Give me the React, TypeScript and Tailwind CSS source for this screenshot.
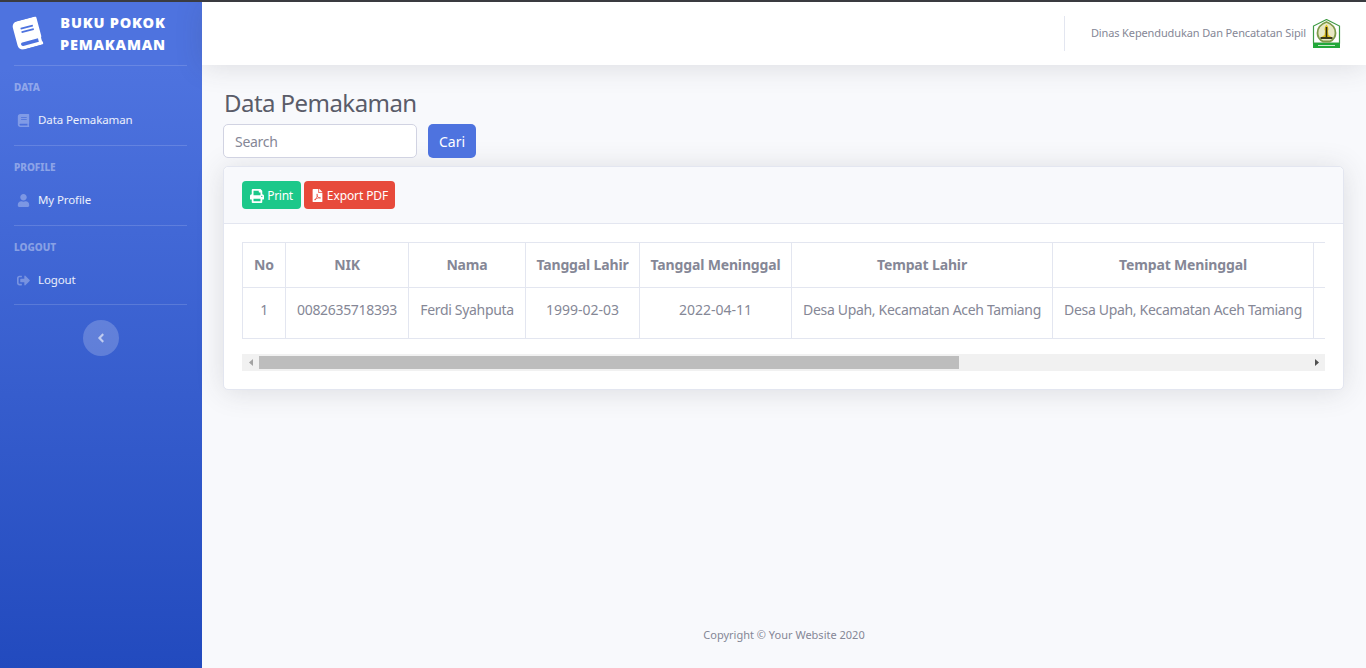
import { FaBook, FaUser, FaSignOutAlt, FaPrint, FaFilePdf, FaAngleLeft } from "react-icons/fa";

const fontStack = { fontFamily: '"Noto Sans", "Open Sans", sans-serif' };

function Emblem() {
  return (
    <svg width="29" height="29" viewBox="0 0 29 29" aria-hidden="true">
      <path d="M14.5 0.5 L27.5 7 L27.5 24 L1.5 24 L1.5 7 Z" fill="#ffffff" stroke="#3f9b45" strokeWidth="1.2" />
      <path d="M14.5 3 C20 5 23.5 9 23.5 14 C23.5 18 21 21 18 22.5 L11 22.5 C8 21 5.5 18 5.5 14 C5.5 9 9 5 14.5 3 Z" fill="#e8e8c4" stroke="#7d9a4a" strokeWidth="1.8" />
      <path d="M14.5 5.5 C16.5 8 17 10.5 16 12 L16.5 16 L19.5 18 L9.5 18 L12.5 16 L13 12 C12 10.5 12.5 8 14.5 5.5 Z" fill="#e2c21c" />
      <rect x="13.7" y="8" width="1.6" height="10" fill="#2c2c14" />
      <rect x="8.5" y="18" width="12" height="2" fill="#3a3a1a" />
      <rect x="1" y="24" width="27" height="5" fill="#22a83a" />
      <rect x="6" y="26" width="17" height="1" fill="#c9eccd" />
    </svg>
  );
}

function SideItem({ icon, label }: { icon: React.ReactNode; label: string }) {
  return (
    <div className="flex h-[24px] items-center pl-[17px] text-[11.5px] tracking-[-0.1px] text-white/90">
      <span className="flex w-[21px] shrink-0 items-center text-[13px] text-white/30">{icon}</span>
      <span>{label}</span>
    </div>
  );
}

function SideHeading({ label }: { label: string }) {
  return (
    <div className="flex h-[42px] items-center pl-[14px] pt-[1px] text-[10px] font-extrabold uppercase text-white/40">
      {label}
    </div>
  );
}

function Divider() {
  return <div className="ml-[14px] mr-[15px] h-px bg-white/15" />;
}

const heads = ["No", "NIK", "Nama", "Tanggal Lahir", "Tanggal Meninggal", "Tempat Lahir", "Tempat Meninggal", ""];
const cells = ["1", "0082635718393", "Ferdi Syahputa", "1999-02-03", "2022-04-11", "Desa Upah, Kecamatan Aceh Tamiang", "Desa Upah, Kecamatan Aceh Tamiang", ""];
const widths = [43, 123, 117, 114, 152, 261, 261, 40];

export default function App() {
  return (
    <div style={fontStack} className="flex h-screen overflow-hidden border-t-2 border-[#3a3b40] bg-[#f8f9fc] text-[#858796]">
      <aside className="w-[202px] shrink-0 bg-gradient-to-b from-[#4e73df] from-10% to-[#224abe]">
        <div className="flex h-[63px] items-center">
          <div className="flex w-[54px] justify-center text-[29px] text-white">
            <FaBook className="-rotate-[15deg]" />
          </div>
          <div className="w-[118px] pb-[2px] text-center text-[14.5px] font-black uppercase leading-[22px] tracking-[0.8px] text-white">
            Buku Pokok Pemakaman
          </div>
        </div>
        <Divider />
        <SideHeading label="Data" />
        <SideItem icon={<FaBook />} label="Data Pemakaman" />
        <div className="h-[13px]" />
        <Divider />
        <SideHeading label="Profile" />
        <SideItem icon={<FaUser />} label="My Profile" />
        <div className="h-[13px]" />
        <Divider />
        <SideHeading label="Logout" />
        <SideItem icon={<FaSignOutAlt />} label="Logout" />
        <div className="h-[12px]" />
        <Divider />
        <div className="mt-[15px] flex justify-center">
          <div className="flex h-[36px] w-[36px] items-center justify-center rounded-full bg-white/20 text-[14px] text-white/60">
            <FaAngleLeft />
          </div>
        </div>
      </aside>

      <main className="flex min-w-0 flex-1 flex-col">
        <header className="relative z-10 flex h-[63px] shrink-0 items-center justify-end bg-white pr-[25px] shadow-[0_2px_28px_rgba(58,59,69,0.15)]">
          <div className="mr-[26px] h-[35px] w-px bg-[#e3e6f0]" />
          <span className="mr-[6px] text-[11px] tracking-[-0.12px] text-[#858796]">Dinas Kependudukan Dan Pencatatan Sipil</span>
          <Emblem />
        </header>

        <div className="flex-1 pl-[21px] pr-[22px]">
          <h1 className="flex h-[59px] items-end pb-[5px] pl-[1px] text-[24px] leading-[32px] tracking-[-0.55px] text-[#5a5c69]">Data Pemakaman</h1>

          <div className="flex gap-[11px]">
            <input
              placeholder="Search"
              className="h-[34px] w-[194px] rounded-[5px] border border-[#d1d3e2] bg-white px-[11px] text-[14px] tracking-[-0.3px] outline-none placeholder:text-[#858796]"
            />
            <button className="h-[34px] w-[48px] rounded-[5px] bg-[#4e73df] text-[14px] text-white">Cari</button>
          </div>

          <section className="mt-[8px] rounded-[5px] border border-[#e3e6f0] bg-white shadow-[0_2px_28px_rgba(58,59,69,0.15)]">
            <div className="flex gap-[3px] rounded-t-[5px] border-b border-[#e3e6f0] bg-[#f8f9fc] px-[18px] py-[14px]">
              <button className="flex h-[28px] w-[59px] items-center justify-center gap-[3px] rounded-[4px] bg-[#1cc88a] pt-[1px] text-[12px] tracking-[-0.3px] text-white">
                <FaPrint className="text-[14px]" />
                Print
              </button>
              <button className="flex h-[28px] w-[91px] items-center justify-center gap-[3px] rounded-[4px] bg-[#e74a3b] pt-[1px] text-[12px] tracking-[-0.1px] text-white">
                <FaFilePdf className="text-[13px]" />
                Export PDF
              </button>
            </div>

            <div className="p-[18px]">
              <div className="overflow-hidden">
                <table className="w-[1111px] table-fixed border-collapse text-center text-[14px]">
                  <colgroup>
                    {widths.map((w, i) => (
                      <col key={i} style={{ width: w }} />
                    ))}
                  </colgroup>
                  <thead>
                    <tr className="h-[45px]">
                      {heads.map((h, i) => (
                        <th key={i} className="whitespace-nowrap border border-[#e3e6f0] p-0 pb-[2px] font-bold tracking-[-0.15px]">
                          {h}
                        </th>
                      ))}
                    </tr>
                  </thead>
                  <tbody>
                    <tr className="h-[51px]">
                      {cells.map((c, i) => (
                        <td
                          key={i}
                          className={
                            i === 3 || i === 4
                              ? "whitespace-nowrap border border-[#e3e6f0] p-0 pt-[11px] align-top leading-[21px]"
                              : "whitespace-nowrap border border-[#e3e6f0] p-0 pt-[11px] align-top leading-[21px] tracking-[-0.32px]"
                          }
                        >
                          {c}
                        </td>
                      ))}
                    </tr>
                  </tbody>
                </table>
              </div>

              <div className="mt-[15px] flex h-[17px] items-center bg-[#f1f1f1]">
                <div className="flex h-[17px] w-[17px] items-center justify-center">
                  <svg width="4" height="7" viewBox="0 0 4 7" aria-hidden="true"><path d="M4 0 L0 3.5 L4 7 Z" fill="#a3a3a3" /></svg>
                </div>
                <div className="h-[13px] w-[700px] bg-[#bdbdbd]" />
                <div className="flex-1" />
                <div className="flex h-[17px] w-[17px] items-center justify-center">
                  <svg width="4" height="7" viewBox="0 0 4 7" aria-hidden="true"><path d="M0 0 L4 3.5 L0 7 Z" fill="#505050" /></svg>
                </div>
              </div>
            </div>
          </section>
        </div>

        <footer className="flex h-[66px] shrink-0 items-center justify-center text-[11px] text-[#858796]">
          Copyright © Your Website 2020
        </footer>
      </main>
    </div>
  );
}
